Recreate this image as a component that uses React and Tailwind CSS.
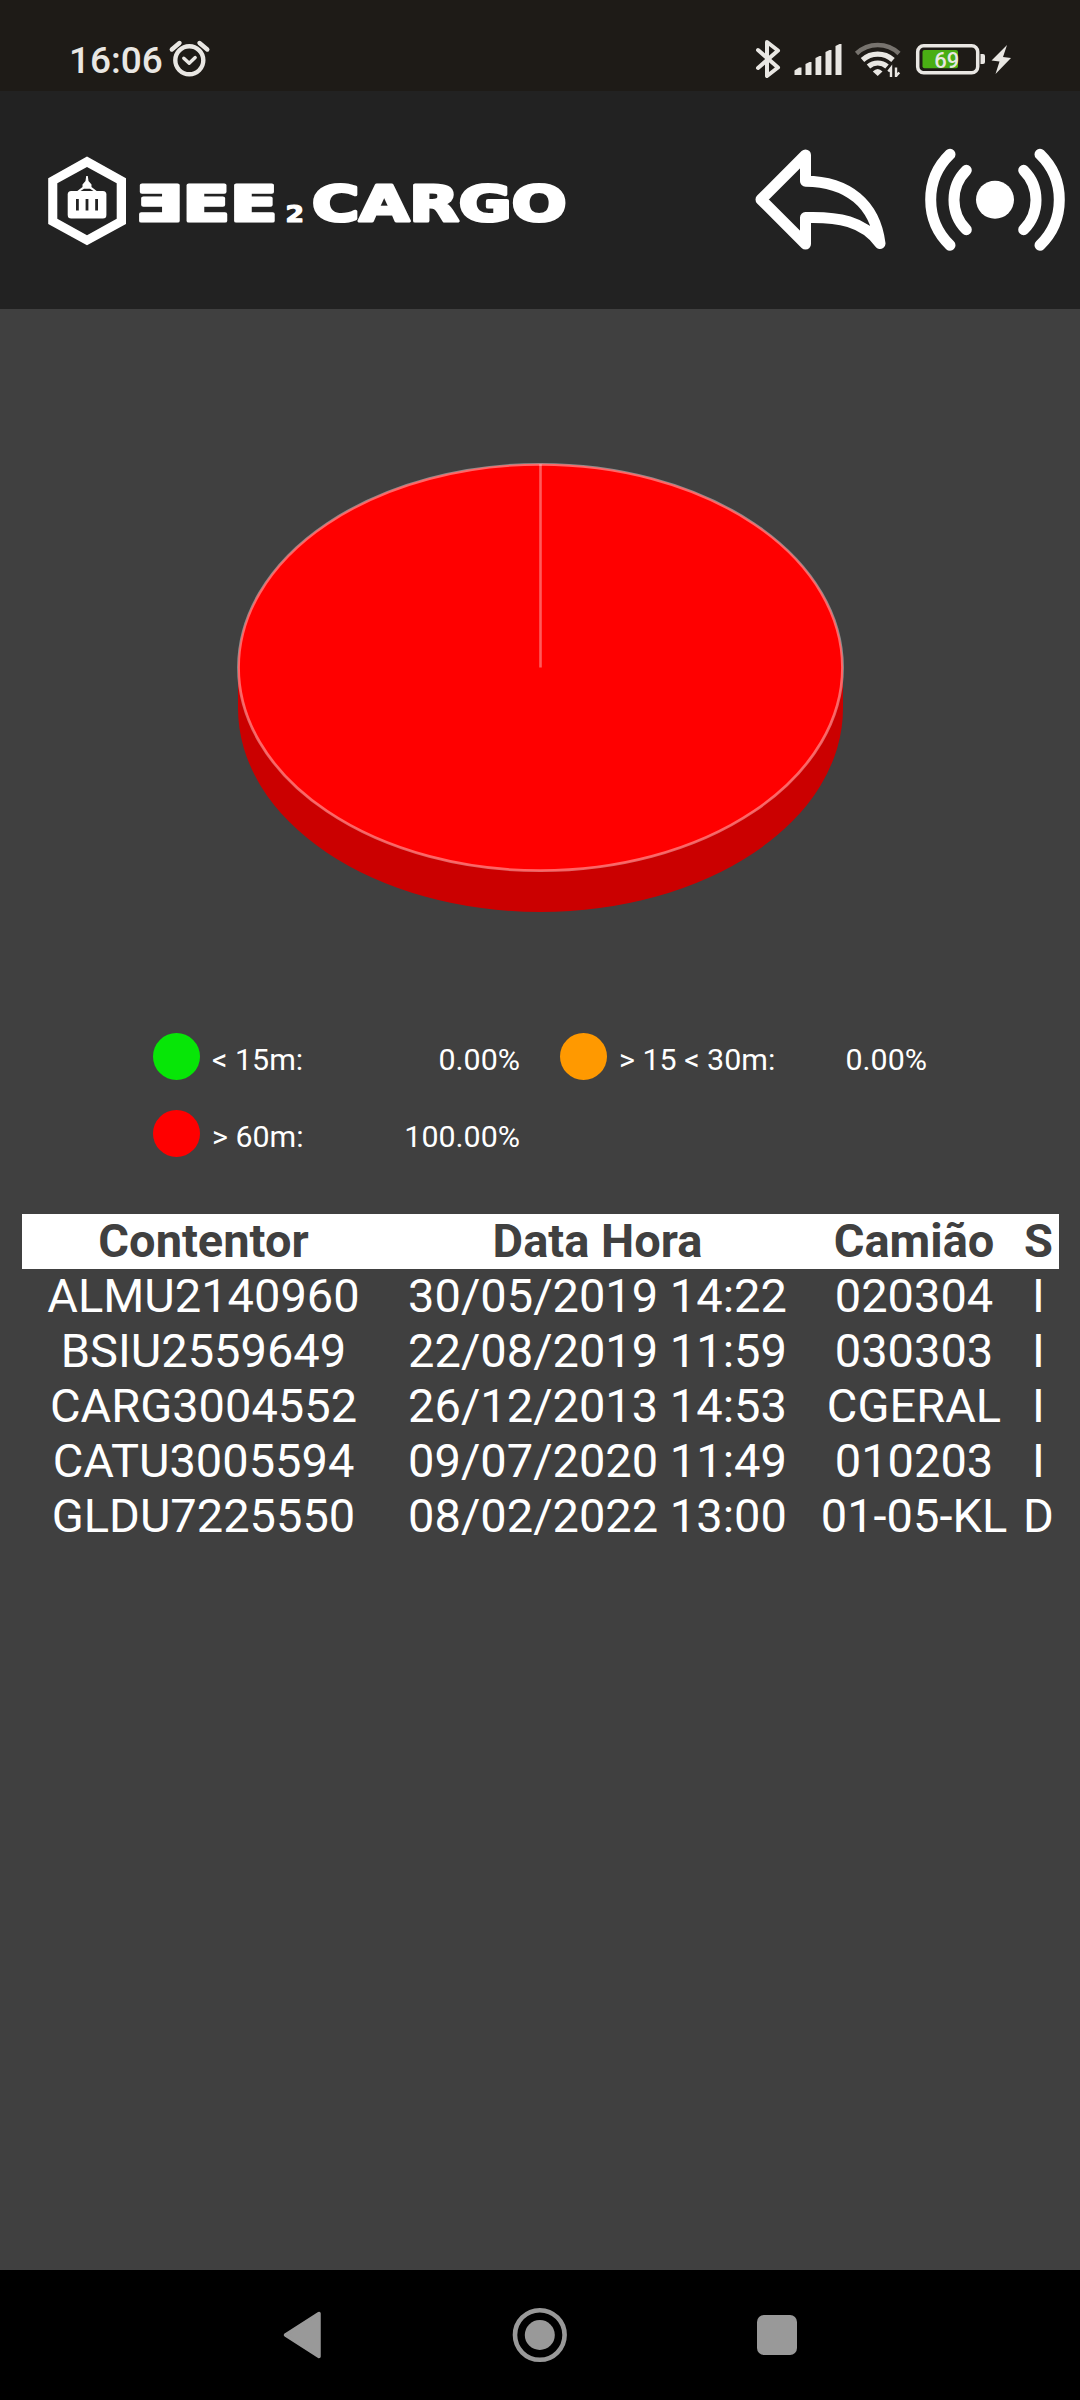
const rows = [
  ["ALMU2140960", "30/05/2019 14:22", "020304", "I"],
  ["BSIU2559649", "22/08/2019 11:59", "030303", "I"],
  ["CARG3004552", "26/12/2013 14:53", "CGERAL", "I"],
  ["CATU3005594", "09/07/2020 11:49", "010203", "I"],
  ["GLDU7225550", "08/02/2022 13:00", "01-05-KL", "D"],
];

function StatusBar() {
  return (
    <div className="flex h-[91px] shrink-0 items-start bg-[#1e1b17] text-[#e9e7e3]">
      <span className="ml-[69px] mt-[39px] w-[95px] whitespace-nowrap text-[37px] font-medium leading-[43px]">16:06</span>
      <svg className="ml-[4px] mt-[38px] h-[42px] w-[44px]" viewBox="168 38 44 42" fill="none" stroke="currentColor" strokeLinecap="round" strokeLinejoin="round">
        <circle cx="189.3" cy="60.3" r="14" strokeWidth="4.4" />
        <path d="M183.8 58.2 189.2 63.2 195.2 57.6" strokeWidth="3.400" />
        <path d="M171.8 49.5 179.5 43M199.5 43 207.3 49.5" strokeWidth="4.400" />
      </svg>
      <svg className="ml-auto mr-[64px] mt-[36px] h-[46px] w-[266px]" viewBox="750 36 266 46" fill="none">
        <path d="M758 50 778 67.500 767 76V42L778 50.500 758 68" stroke="currentColor" strokeWidth="4" strokeLinecap="round" strokeLinejoin="round" />
        <g fill="currentColor">
          <path d="M794.500 75V70.500L799 67.500H801.500V75Z" />
          <path d="M805.500 75V64L809.500 62H811.500V75Z" />
          <path d="M815.500 75V58L819.500 56H821.300V75Z" />
          <path d="M825.500 75V52L829.500 50H831.500V75Z" />
          <path d="M835.500 75V46L839.500 44H841.500V75Z" />
        </g>
        <path d="M856.500 53.500A31 31 0 0 1 899 53.500" stroke="#77736e" strokeWidth="4.600" />
        <g stroke="currentColor" strokeWidth="5.200">
          <path d="M862.500 60A23 23 0 0 1 893 60" />
          <path d="M868.500 66.500A14 14 0 0 1 887 66.500" />
        </g>
        <path d="M872.800 71.500Q877.700 66.500 882.500 71.500L877.700 76Z" fill="currentColor" />
        <path d="M891 77V68L888.300 71.500M896 77V67.500M896 76L899.300 72.500" stroke="currentColor" strokeWidth="2.400" />
        <rect x="917.700" y="45.700" width="60" height="27" rx="6" stroke="currentColor" strokeWidth="3.500" />
        <rect x="922.500" y="50" width="35.500" height="18.300" rx="2" fill="#4aae14" />
        <path d="M980.500 54H983Q985 54 985 56V62Q985 64 983 64H980.500Z" fill="currentColor" />
        <text x="946.700" y="67.500" textAnchor="middle" fontSize="22" fontWeight="500" fill="currentColor" fontFamily="Roboto">69</text>
        <path d="M1007 45 991.500 60.500 999.500 61.500 995.500 74 1011 58 1003 57Z" fill="currentColor" />
      </svg>
    </div>
  );
}

function Header() {
  return (
    <header className="flex h-[218px] shrink-0 items-start bg-[#222222] text-white">
      <svg className="ml-[40px] mt-[54px] h-[110px] w-[540px]" viewBox="40 145 540 110" fill="currentColor">
        <path fillRule="evenodd" d="M87 156.500 126 178.300V224L87 245.200 48.200 224V178.300ZM87 167 57.300 183.300V218.700L87 235.300 116.700 218.700V183.300Z" />
        <path d="M86.200 176H87.800L88.500 181 91.500 184.500V187L98 192H76L82.500 187V184.500L85.500 181Z" />
        <path d="M80.500 191 84 188.800H90L93.500 191Z" fill="#222222" />
        <rect x="67.700" y="191" width="38.700" height="27.400" rx="3.500" />
        <path d="M77.400 199V210.500M87 199V210.500M96.600 199V210.500" stroke="#222222" strokeWidth="2.800" />
        <g fontFamily="DejaVu Sans" fontWeight="700" stroke="currentColor" strokeLinejoin="round">
          <text x="135" y="220.700" fontSize="49" strokeWidth="3.200" textLength="142.500" lengthAdjust="spacingAndGlyphs">ƎEE</text>
          <text x="285.500" y="221.500" fontSize="22.500" strokeWidth="1.200" textLength="18.500" lengthAdjust="spacingAndGlyphs">2</text>
          <text x="312" y="220.700" fontSize="49" strokeWidth="3.200" textLength="254.500" lengthAdjust="spacingAndGlyphs">CARGO</text>
        </g>
      </svg>
      <svg className="ml-auto mt-[54px] h-[110px] w-[330px]" viewBox="750 145 330 110" fill="none" stroke="currentColor" strokeWidth="11" strokeLinecap="round" strokeLinejoin="round">
        <path d="M805.500 155 761 199.500 805.500 244V217.500C838 216.500 864 221 880 243.500C875 204 848 181.500 805.500 181.200Z" />
        <circle cx="995" cy="199.700" r="19" fill="currentColor" stroke="none" />
        <path d="M966.300 170.300A42 42 0 0 0 966.300 229.700M1023.700 170.300A42 42 0 0 1 1023.700 229.700M950 154.300A63.300 63.300 0 0 0 950 245.300M1040 154.300A63.300 63.300 0 0 1 1040 245.300" />
      </svg>
    </header>
  );
}

function PieChart() {
  return (
    <svg className="ml-[230px] mt-[146px] h-[470px] w-[622px] shrink-0" viewBox="230 455 622 470">
      <path d="M238 667.500V708.500A302.500 203.500 0 0 0 843 708.500V667.500Z" fill="#cb0000" />
      <ellipse cx="540.500" cy="667.500" rx="302.500" ry="203.700" fill="#ff0000" />
      <path d="M540.500 667.500V464.300" stroke="#ff5a5a" strokeWidth="2.600" />
      <ellipse cx="540.500" cy="667.500" rx="302" ry="203.200" fill="none" stroke="#ffffff" strokeOpacity="0.4" strokeWidth="2.800" />
    </svg>
  );
}

function LegendItem({ dot, label, value }) {
  return (
    <div className="flex h-[77px] w-[367px] items-start text-[30.4px] leading-[36px]">
      <span className={"size-[47px] shrink-0 rounded-full " + dot} />
      <span className="ml-[12px] mt-[9px]">{label}</span>
      <span className="ml-auto mt-[9px]">{value}</span>
    </div>
  );
}

export default function App() {
  return (
    <div className="flex h-[2400px] w-[1080px] flex-col overflow-hidden bg-[#404040] font-['Roboto',sans-serif] text-white">
      <StatusBar />
      <Header />
      <PieChart />
      <div className="ml-[153px] mt-[108px] grid w-[780px] shrink-0 grid-cols-[367px_367px] gap-x-[40px]">
        <LegendItem dot="bg-[#07e607]" label="< 15m:" value="0.00%" />
        <LegendItem dot="bg-[#ff9900]" label="> 15 < 30m:" value="0.00%" />
        <LegendItem dot="bg-[#ff0000]" label="> 60m:" value="100.00%" />
      </div>
      <table className="ml-[22px] mt-[27px] w-[1037px] table-fixed border-collapse text-center text-[47px] leading-[53px]">
        <colgroup>
          <col className="w-[363px]" />
          <col className="w-[425px]" />
          <col className="w-[208px]" />
          <col className="w-[41px]" />
        </colgroup>
        <thead>
          <tr className="h-[55px] bg-white text-[#404040]">
            {["Contentor", "Data Hora", "Camião", "S"].map((h) => (
              <th key={h} className="p-0 align-top font-bold">{h}</th>
            ))}
          </tr>
        </thead>
        <tbody>
          {rows.map((r) => (
            <tr key={r[0]} className="h-[55px]">
              {r.map((c, i) => (
                <td key={i} className="whitespace-nowrap p-0 align-top">{c}</td>
              ))}
            </tr>
          ))}
        </tbody>
      </table>
      <nav className="mt-auto h-[130px] shrink-0 bg-black">
        <div className="flex h-full items-center justify-center">
          <svg className="h-[130px] w-[1080px]" viewBox="0 2270 1080 130" fill="#999999">
            <path d="M285.500 2335 319 2313.500V2356.500Z" stroke="#999999" strokeWidth="3.500" strokeLinejoin="round" />
            <circle cx="539.800" cy="2335" r="24.800" fill="none" stroke="#999999" strokeWidth="4.600" />
            <circle cx="539.800" cy="2335" r="15" />
            <rect x="757" y="2315" width="40" height="40" rx="7" />
          </svg>
        </div>
      </nav>
    </div>
  );
}
